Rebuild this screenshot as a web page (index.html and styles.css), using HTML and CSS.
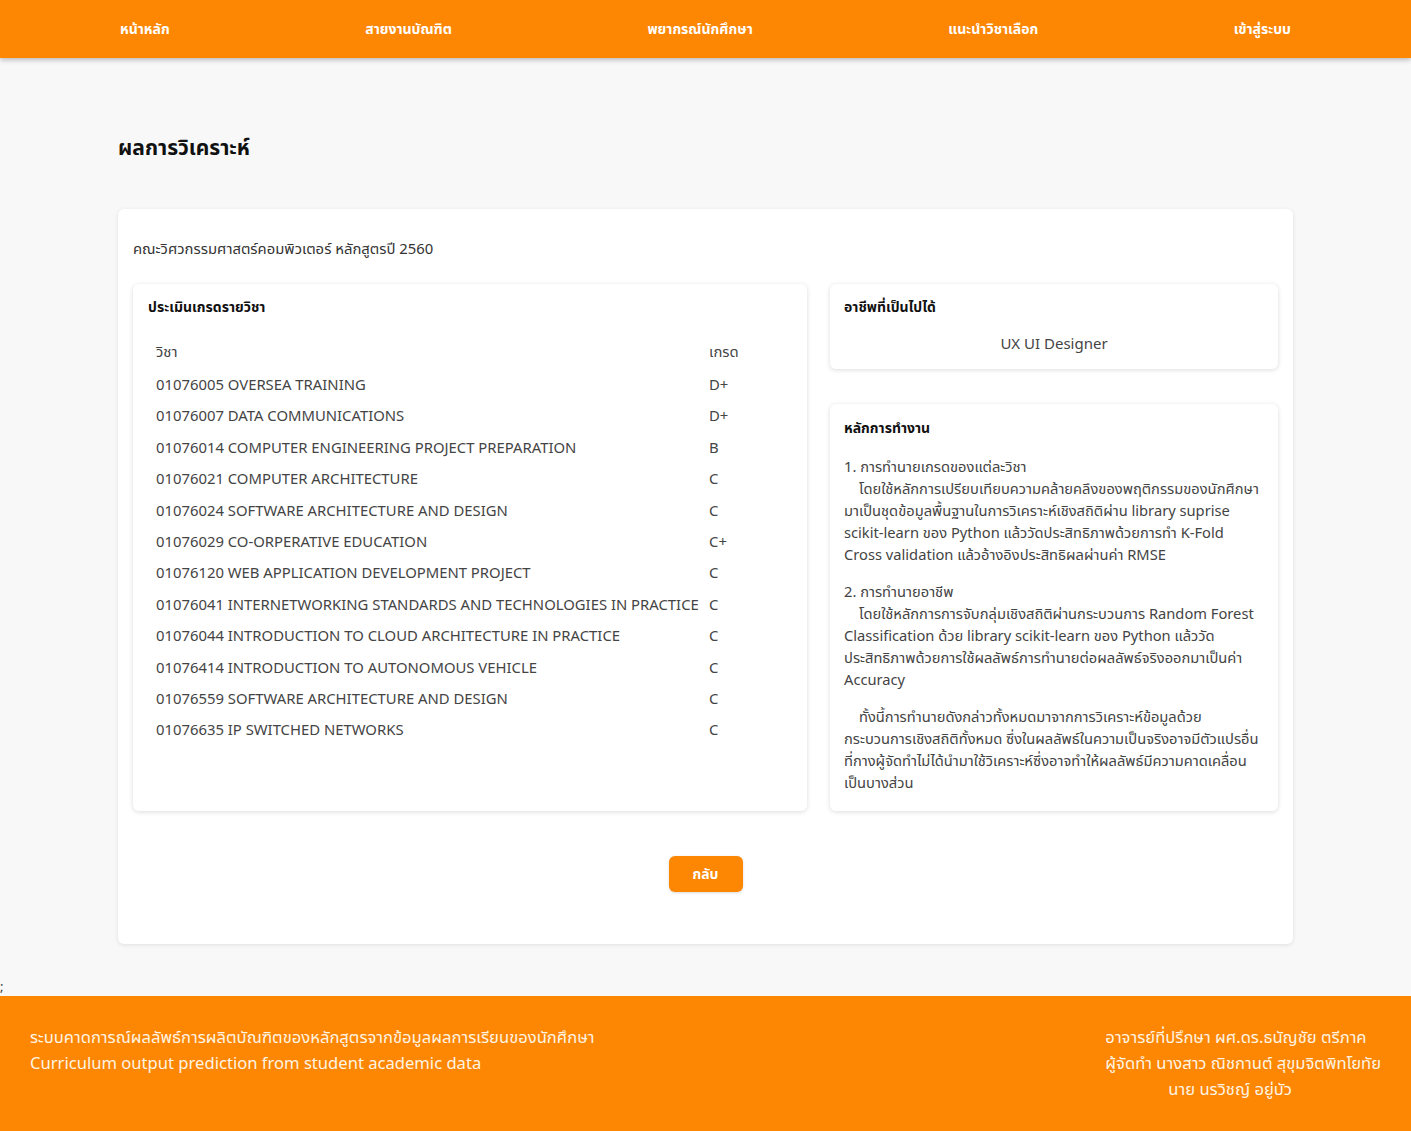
FILE: index.html
```html
<!DOCTYPE html>
<html lang="th">
<head>
<meta charset="utf-8">
<title>ผลการวิเคราะห์</title>
<link rel="stylesheet" href="styles.css">
</head>
<body>
<nav class="topnav">
  <a class="nav-item">หน้าหลัก</a>
  <a class="nav-item">สายงานบัณฑิต</a>
  <a class="nav-item">พยากรณ์นักศึกษา</a>
  <a class="nav-item">แนะนำวิชาเลือก</a>
  <a class="nav-item">เข้าสู่ระบบ</a>
</nav>
<main class="page">
  <h1 class="page-title">ผลการวิเคราะห์</h1>
  <section class="main-card">
    <p class="faculty">คณะวิศวกรรมศาสตร์คอมพิวเตอร์ หลักสูตรปี 2560</p>
    <div class="grid">
      <div class="card grades">
        <h2 class="card-title">ประเมินเกรดรายวิชา</h2>
        <table class="grade-table">
          <thead>
            <tr><th>วิชา</th><th>เกรด</th></tr>
          </thead>
          <tbody>
            <tr><td>01076005 OVERSEA TRAINING</td><td>D+</td></tr>
            <tr><td>01076007 DATA COMMUNICATIONS</td><td>D+</td></tr>
            <tr><td>01076014 COMPUTER ENGINEERING PROJECT PREPARATION</td><td>B</td></tr>
            <tr><td>01076021 COMPUTER ARCHITECTURE</td><td>C</td></tr>
            <tr><td>01076024 SOFTWARE ARCHITECTURE AND DESIGN</td><td>C</td></tr>
            <tr><td>01076029 CO-ORPERATIVE EDUCATION</td><td>C+</td></tr>
            <tr><td>01076120 WEB APPLICATION DEVELOPMENT PROJECT</td><td>C</td></tr>
            <tr><td>01076041 INTERNETWORKING STANDARDS AND TECHNOLOGIES IN PRACTICE</td><td>C</td></tr>
            <tr><td>01076044 INTRODUCTION TO CLOUD ARCHITECTURE IN PRACTICE</td><td>C</td></tr>
            <tr><td>01076414 INTRODUCTION TO AUTONOMOUS VEHICLE</td><td>C</td></tr>
            <tr><td>01076559 SOFTWARE ARCHITECTURE AND DESIGN</td><td>C</td></tr>
            <tr><td>01076635 IP SWITCHED NETWORKS</td><td>C</td></tr>
          </tbody>
        </table>
      </div>
      <div class="side">
        <div class="card career">
          <h2 class="card-title">อาชีพที่เป็นไปได้</h2>
          <p class="career-name">UX UI Designer</p>
        </div>
        <div class="card method">
          <h2 class="card-title">หลักการทำงาน</h2>
          <p class="para">1. การทำนายเกรดของแต่ละวิชา<br><span class="indent"></span>โดยใช้หลักการเปรียบเทียบความคล้ายคลึงของพฤติกรรมของนักศึกษามาเป็นชุดข้อมูลพื้นฐานในการวิเคราะห์เชิงสถิติผ่าน library suprise scikit-learn ของ Python แล้ววัดประสิทธิภาพด้วยการทำ K-Fold Cross validation แล้วอ้างอิงประสิทธิผลผ่านค่า RMSE</p>
          <p class="para">2. การทำนายอาชีพ<br><span class="indent"></span>โดยใช้หลักการการจับกลุ่มเชิงสถิติผ่านกระบวนการ Random Forest Classification ด้วย library scikit-learn ของ Python แล้ววัดประสิทธิภาพด้วยการใช้ผลลัพธ์การทำนายต่อผลลัพธ์จริงออกมาเป็นค่า Accuracy</p>
          <p class="para"><span class="indent"></span>ทั้งนี้การทำนายดังกล่าวทั้งหมดมาจากการวิเคราะห์ข้อมูลด้วยกระบวนการเชิงสถิติทั้งหมด ซึ่งในผลลัพธ์ในความเป็นจริงอาจมีตัวแปรอื่นที่กางผู้จัดทำไม่ได้นำมาใช้วิเคราะห์ซึ่งอาจทำให้ผลลัพธ์มีความคาดเคลื่อนเป็นบางส่วน</p>
        </div>
      </div>
    </div>
    <div class="actions">
      <button class="back-btn">กลับ</button>
    </div>
  </section>
</main>
<div class="stray">;</div>
<footer class="footer">
  <div class="footer-left">
    <p>ระบบคาดการณ์ผลลัพธ์การผลิตบัณฑิตของหลักสูตรจากข้อมูลผลการเรียนของนักศึกษา</p>
    <p>Curriculum output prediction from student academic data</p>
  </div>
  <div class="footer-right">
    <p>อาจารย์ที่ปรึกษา ผศ.ดร.ธนัญชัย ตรีภาค</p>
    <p>ผู้จัดทำ นางสาว ณิชกานต์ สุขุมจิตพิทโยทัย</p>
    <p class="footer-indent">นาย นรวิชญ์ อยู่บัว</p>
  </div>
</footer>
</body>
</html>
```

FILE: styles.css
```css
* { box-sizing: border-box; }

body {
  margin: 0;
  background: #f8f8f8;
  font-family: "Noto Sans", "Noto Sans Thai", "Noto Sans CJK SC", sans-serif;
  color: #333;
}

.topnav {
  height: 58px;
  background: #fd8603;
  display: flex;
  align-items: center;
  justify-content: space-between;
  padding: 0 120px;
  box-shadow: 0 2px 5px rgba(0, 0, 0, 0.25);
  position: relative;
}

.nav-item {
  color: #fff;
  font-size: 14px;
  font-weight: 700;
  text-decoration: none;
}

.page {
  padding: 73px 118px 0;
}

.page-title {
  margin: 0 0 46px;
  font-size: 21px;
  font-weight: 700;
  color: #111;
  line-height: 32px;
}

.main-card {
  background: #fff;
  border-radius: 6px;
  box-shadow: 0 1px 4px rgba(0, 0, 0, 0.1);
  padding: 28px 15px 52px;
}

.faculty {
  margin: 0 0 25px;
  font-size: 14.85px;
  line-height: 22px;
  color: #333;
}

.grid {
  display: grid;
  grid-template-columns: 674px 1fr;
  gap: 23px;
}

.card {
  background: #fff;
  border-radius: 6px;
  box-shadow: 0 1px 5px rgba(0, 0, 0, 0.14);
  padding: 13px 15px;
}

.side .card {
  padding-left: 14px;
  padding-right: 14px;
}

.card-title {
  margin: 0;
  font-size: 14px;
  font-weight: 700;
  line-height: 20px;
  color: #111;
}

.grade-table {
  margin: 20px 0 0 8px;
  border-collapse: collapse;
  font-size: 14.85px;
  color: #444;
}

.grade-table th,
.grade-table td {
  text-align: left;
  font-weight: 400;
  padding: 0;
  height: 31.4px;
  vertical-align: middle;
  white-space: nowrap;
}

.grade-table th:first-child,
.grade-table td:first-child {
  width: 553px;
}

.side {
  display: flex;
  flex-direction: column;
  gap: 35px;
}

.career {
  padding-bottom: 15px;
}

.career-name {
  margin: 15px 0 0;
  text-align: center;
  font-size: 15px;
  line-height: 22px;
  color: #444;
}

.method {
  padding-top: 14px;
  padding-bottom: 18px;
}

.para {
  margin: 15px 0 0;
  font-size: 14.7px;
  line-height: 22px;
  color: #444;
}

.method .card-title + .para {
  margin-top: 17px;
}

.indent {
  display: inline-block;
  width: 15px;
}

.actions {
  display: flex;
  justify-content: center;
  margin-top: 45px;
}

.back-btn {
  background: #fd8603;
  color: #fff;
  border: none;
  border-radius: 6px;
  width: 74px;
  height: 36px;
  font-family: inherit;
  font-size: 14px;
  font-weight: 700;
  box-shadow: 0 1px 3px rgba(0, 0, 0, 0.15);
}

.stray {
  margin-top: 34px;
  font-size: 13px;
  line-height: 16px;
  color: #333;
}

.footer {
  margin-top: 2px;
  background: #fd8603;
  min-height: 136px;
  display: flex;
  justify-content: space-between;
  padding: 28px 30px 0;
  color: #fff4e2;
  font-size: 16.6px;
  line-height: 26px;
}

.footer p {
  margin: 0;
}

.footer-indent {
  padding-left: 63px;
}
```
